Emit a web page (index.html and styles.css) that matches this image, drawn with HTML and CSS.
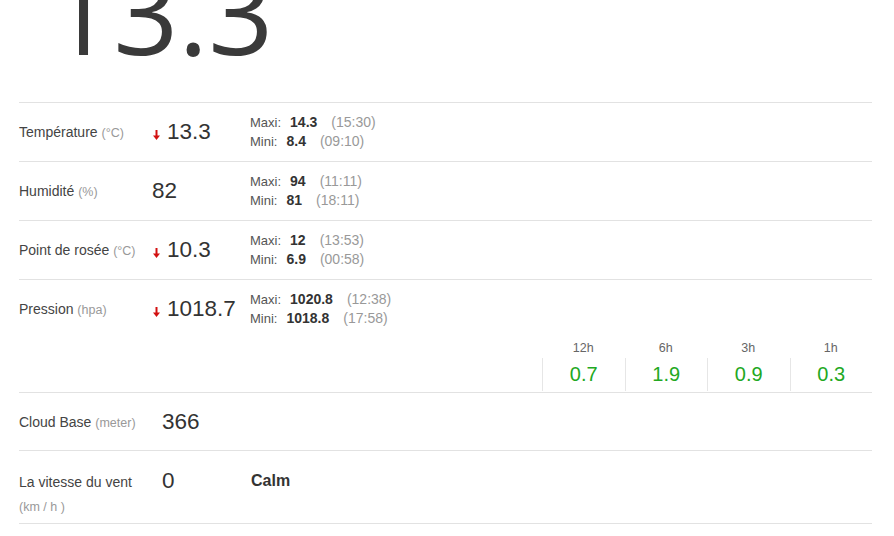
FILE: index.html
```html
<!DOCTYPE html>
<html>
<head>
<meta charset="utf-8">
<link rel="stylesheet" href="styles.css">
</head>
<body>
<div class="page">
  <div class="hero"><span class="hero-num">13.3</span></div>
  <div class="table">
    <div class="row">
      <div class="label">Température <span class="unit">(°C)</span></div>
      <div class="value"><svg class="arrow" viewBox="0 0 9 10" width="9" height="10"><path d="M4.5 0v7" stroke="#d21010" stroke-width="2"/><path d="M1 5.5h7L4.5 10z" fill="#d21010"/></svg>13.3</div>
      <div class="mm">
        <div><span class="k">Maxi:</span><b>14.3</b><span class="t">(15:30)</span></div>
        <div><span class="k">Mini:</span><b>8.4</b><span class="t">(09:10)</span></div>
      </div>
    </div>
    <div class="row">
      <div class="label">Humidité <span class="unit">(%)</span></div>
      <div class="value">82</div>
      <div class="mm">
        <div><span class="k">Maxi:</span><b>94</b><span class="t">(11:11)</span></div>
        <div><span class="k">Mini:</span><b>81</b><span class="t">(18:11)</span></div>
      </div>
    </div>
    <div class="row">
      <div class="label">Point de rosée <span class="unit">(°C)</span></div>
      <div class="value"><svg class="arrow" viewBox="0 0 9 10" width="9" height="10"><path d="M4.5 0v7" stroke="#d21010" stroke-width="2"/><path d="M1 5.5h7L4.5 10z" fill="#d21010"/></svg>10.3</div>
      <div class="mm">
        <div><span class="k">Maxi:</span><b>12</b><span class="t">(13:53)</span></div>
        <div><span class="k">Mini:</span><b>6.9</b><span class="t">(00:58)</span></div>
      </div>
    </div>
    <div class="row no-border">
      <div class="label">Pression <span class="unit">(hpa)</span></div>
      <div class="value"><svg class="arrow" viewBox="0 0 9 10" width="9" height="10"><path d="M4.5 0v7" stroke="#d21010" stroke-width="2"/><path d="M1 5.5h7L4.5 10z" fill="#d21010"/></svg>1018.7</div>
      <div class="mm">
        <div><span class="k">Maxi:</span><b>1020.8</b><span class="t">(12:38)</span></div>
        <div><span class="k">Mini:</span><b>1018.8</b><span class="t">(17:58)</span></div>
      </div>
    </div>
    <div class="trends">
      <div class="trend"><div class="th">12h</div><div class="tv">0.7</div></div>
      <div class="trend"><div class="th">6h</div><div class="tv">1.9</div></div>
      <div class="trend"><div class="th">3h</div><div class="tv">0.9</div></div>
      <div class="trend"><div class="th">1h</div><div class="tv">0.3</div></div>
    </div>
    <div class="row row2">
      <div class="label">Cloud Base <span class="unit">(meter)</span></div>
      <div class="value">366</div>
    </div>
    <div class="row row2 wind">
      <div class="label">La vitesse du vent<br><span class="unit">(km / h )</span></div>
      <div class="value">0</div>
      <div class="calm">Calm</div>
    </div>
  </div>
</div>
</body>
</html>
```
FILE: styles.css
```css
* { box-sizing: border-box; }
html, body { margin: 0; padding: 0; background: #fff; }
body { font-family: "Liberation Sans", Arial, sans-serif; color: #333; }
.page { width: 894px; height: 536px; overflow: hidden; }
.hero { height: 102px; overflow: hidden; padding-left: 48px; }
.hero-num {
  display: block;
  font-family: "Open Sans", sans-serif;
  font-weight: 500;
  font-size: 114px;
  line-height: 114px;
  margin-top: -46px;
  color: #3a3a3a;
}
.table { margin-left: 19px; width: 853px; border-top: 1px solid #e2e2e2; }
.row {
  display: grid;
  grid-template-columns: 133px 98px 1fr;
  align-items: center;
  height: 59px;
  border-bottom: 1px solid #e2e2e2;
}
.row.no-border { border-bottom: none; height: 58px; }
.label { font-size: 14px; color: #444; }
.unit { font-size: 12.5px; color: #999; }
.value { font-size: 22.5px; color: #333; display: flex; align-items: center; }
.arrow { margin-right: 6px; margin-top: 5px; }
.mm { font-size: 13px; line-height: 19px; color: #555; }
.mm .k { display: inline-block; margin-right: 9px; }
.mm b { color: #333; margin-right: 14px; font-size: 14px; }
.mm .t { color: #999; font-size: 14px; }
.trends {
  display: flex;
  justify-content: flex-end;
  height: 55px;
  border-bottom: 1px solid #e2e2e2;
}
.trend { width: 82.5px; }
.th { font-size: 12.5px; color: #666; text-align: center; height: 20px; line-height: 20px; }
.tv {
  font-size: 20px; color: #22a822; text-align: center;
  border-left: 1px solid #e6e6e6; height: 33px; line-height: 33px;
}
.row2 { grid-template-columns: 143px 89px 1fr; height: 58px; }
.wind { height: 73px; align-items: start; padding-top: 19px; }
.wind .label { line-height: 24px; }
.wind .value { line-height: 22px; }
.calm { font-size: 16px; font-weight: bold; color: #333; line-height: 22px; }
```
